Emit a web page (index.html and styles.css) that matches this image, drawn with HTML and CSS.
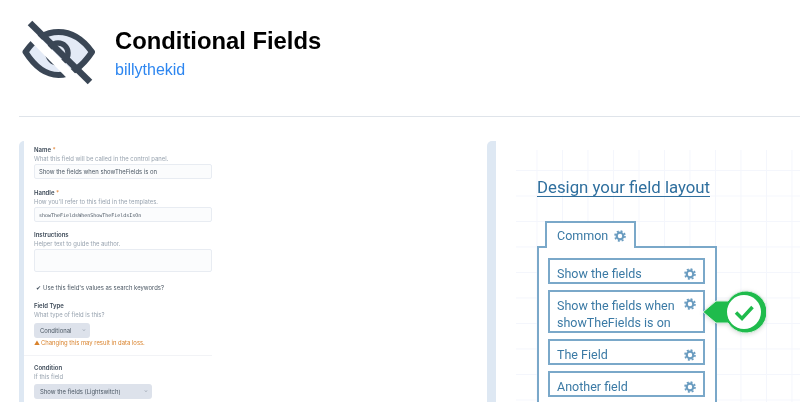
FILE: index.html
```html
<!DOCTYPE html>
<html lang="en">
<head>
<meta charset="utf-8">
<title>Conditional Fields</title>
<link rel="stylesheet" href="styles.css">
</head>
<body>
<svg class="defs" width="0" height="0" aria-hidden="true">
  <symbol id="gear" viewBox="0 0 12 12">
    <circle cx="6" cy="6" r="3.3" fill="none" stroke="currentColor" stroke-width="2.2"/>
    <circle cx="6" cy="6" r="5" fill="none" stroke="currentColor" stroke-width="1.6" stroke-dasharray="2 1.93"/>
  </symbol>
</svg>
<header class="plugin-header">
  <svg class="logo" viewBox="0 0 76 64" width="76" height="64" aria-hidden="true">
    <path d="M4.500 32 C14 18 25 12 37.500 12 C50 12 61 18 71 32 C61 47 50 55 37.500 55 C25 55 14 47 4.500 32 Z" fill="#e3eaf6" stroke="#3a4655" stroke-width="6" stroke-linejoin="round"/>
    <circle cx="37" cy="33" r="10" fill="#e3eaf6" stroke="#3a4655" stroke-width="5.500"/>
    <path d="M4 3 L66 66" stroke="#fff" stroke-width="9" transform="translate(-1 5)"/>
    <path d="M9 3 L69 62" stroke="#3a4655" stroke-width="6.500"/>
  </svg>
  <div class="plugin-meta">
    <h1 class="plugin-title">Conditional Fields</h1>
    <a class="plugin-author" href="#">billythekid</a>
  </div>
</header>
<hr class="rule">
<main class="gallery">
  <section class="shot shot-form">
    <div class="form">
      <div class="field">
        <div class="label">Name <span class="req">*</span></div>
        <div class="hint">What this field will be called in the control panel.</div>
        <div class="input">Show the fields when showTheFields is on</div>
      </div>
      <div class="field">
        <div class="label">Handle <span class="req">*</span></div>
        <div class="hint">How you'll refer to this field in the templates.</div>
        <div class="input mono">showTheFieldsWhenShowTheFieldsIsOn</div>
      </div>
      <div class="field">
        <div class="label">Instructions</div>
        <div class="hint">Helper text to guide the author.</div>
        <div class="input tall"></div>
      </div>
      <div class="check-row"><span class="tick">✔</span>Use this field's values as search keywords?</div>
      <div class="field">
        <div class="label">Field Type</div>
        <div class="hint">What type of field is this?</div>
        <div class="select short">Conditional<span class="caret">⌄</span></div>
        <div class="warning"><span class="warn-icon">▲</span>Changing this may result in data loss.</div>
      </div>
      <div class="divider"></div>
      <div class="field">
        <div class="label">Condition</div>
        <div class="hint">If this field</div>
        <div class="select wide">Show the fields (Lightswitch)<span class="caret">⌄</span></div>
      </div>
    </div>
  </section>
  <section class="shot shot-design">
    <div class="design">
      <h2 class="design-title">Design your field layout</h2>
      <div class="tab">Common<svg class="gear"><use href="#gear"/></svg></div>
      <div class="tab-box">
        <div class="item"><span>Show the fields</span><svg class="gear"><use href="#gear"/></svg></div>
        <div class="item item-double">
          <span>Show the fields when<br>showTheFields is on</span><svg class="gear"><use href="#gear"/></svg>
          <svg class="badge" viewBox="0 0 64 44" width="64" height="44" aria-hidden="true">
            <path d="M1 22 L14 11 H26 A21 21 0 1 1 26 33 H14 Z" fill="#1fbb4c" stroke="#d9efe0" stroke-width="1"/>
            <circle cx="42" cy="22" r="17" fill="#fff"/>
            <path d="M34 22.500 L40 28.500 L50.500 17" fill="none" stroke="#1fbb4c" stroke-width="3.500"/>
          </svg>
        </div>
        <div class="item"><span>The Field</span><svg class="gear"><use href="#gear"/></svg></div>
        <div class="item"><span>Another field</span><svg class="gear"><use href="#gear"/></svg></div>
      </div>
    </div>
  </section>
</main>
</body>
</html>
```
FILE: styles.css
```css
* { box-sizing: border-box; }
html, body { margin: 0; height: 402px; overflow: hidden; background: #fff; }
body { font-family: "Liberation Sans", Arial, sans-serif; }
.defs { display: block; height: 0; }

.plugin-header {
  display: flex;
  align-items: flex-start;
  gap: 18px;
  height: 116px;
  padding: 20px 0 0 21px;
}
.logo { flex: none; filter: blur(0.5px); overflow: visible; }
.plugin-meta { padding-top: 6px; filter: blur(0.25px); }
.plugin-title {
  margin: 0;
  font-size: 23.800px;
  line-height: 30px;
  font-weight: 700;
  color: #000;
}
.plugin-author {
  display: block;
  margin-top: 5px;
  font-size: 16px;
  line-height: 18px;
  color: #2d86f0;
  text-decoration: none;
}
.rule {
  margin: 0 0 0 19px;
  height: 1px;
  border: 0;
  background: #dfe4ea;
}

.gallery {
  display: grid;
  grid-template-columns: 448px 1fr;
  gap: 20px;
  margin: 24px 0 0 19px;
}
.shot {
  height: 262px;
  overflow: hidden;
  border-style: solid;
  border-color: #dee8f3;
  border-width: 0;
  border-top-left-radius: 5px;
}
.shot-form { border-left-width: 5px; }
.shot-design {
  border-left-width: 9px;
  width: 320px;
  background: #fff;
}

/* form screenshot */
.form {
  width: 188px;
  padding: 6px 0 0 10px;
  font-family: Inter, "Liberation Sans", sans-serif;
  font-size: 5.900px;
  color: #3f4d5a;
  filter: blur(0.6px);
}
.field { margin-bottom: 10.500px; }
.label { font-weight: 600; line-height: 6px; margin-bottom: 3px; color: #3d4a58; font-size: 6px; }
.req { color: #e5873a; }
.hint { line-height: 6px; color: #98a3af; margin-bottom: 2px; font-size: 5.900px; }
.input {
  height: 15px;
  padding: 0 4px;
  line-height: 14px;
  background: #fbfcfd;
  border: 1px solid #e8ecf2;
  border-radius: 2px;
  color: #4b5763;
  white-space: nowrap;
}
.mono { font-family: "DejaVu Sans Mono", monospace; font-size: 5px; }
.tall { height: 23px; }
.check-row { display: flex; align-items: center; gap: 1px; height: 10px; margin: 0 0 10px; color: #4b5763; font-size: 5.900px; }
.tick { font-size: 6px; color: #3d4a58; width: 8px; text-align: center; }
.select {
  display: flex;
  justify-content: space-between;
  height: 15px;
  margin-top: 5px;
  padding: 0 4px 0 6px;
  line-height: 15px;
  background: #dde2eb;
  border-radius: 3px;
  color: #4b5763;
}
.short { width: 56px; }
.wide { width: 118px; margin-top: 4px; }
.caret { color: #8a94a0; font-size: 5px; line-height: 12px; }
.warning { margin-top: 1px; line-height: 7px; color: #d9822b; font-size: 5.900px; }
.warn-icon { margin-right: 1px; }
.divider { height: 1px; margin: -1px 0 9px -10px; background: #f2f3f6; }

/* design screenshot */
.design {
  margin: 9px 0 0 20px;
  padding: 28px 0 0 21px;
  height: 253px;
  color: #3b7aa5;
  background-image:
    linear-gradient(#f4f6fc 1px, transparent 1px),
    linear-gradient(90deg, #f4f6fc 1px, transparent 1px);
  background-size: 25.500px 25.500px;
  background-position: 20.500px 20px;
}
.design-title, .tab, .tab-box { filter: blur(0.35px); }
.design-title {
  width: max-content;
  margin: 0 0 24px;
  font-family: Roboto, "Liberation Sans", sans-serif;
  font-size: 16.800px;
  line-height: 18px;
  font-weight: 400;
  color: #2f6f9e;
  border-bottom: 1px solid #2f6f9e;
}
.tab {
  position: relative;
  z-index: 1;
  display: flex;
  align-items: center;
  gap: 6px;
  width: 91px;
  height: 27px;
  margin: 0 0 -2px 8px;
  padding: 0 0 1px 10px;
  background: #fff;
  border: 2px solid #7aa8c9;
  border-bottom: 0;
  font-family: Roboto, sans-serif;
  font-size: 12.500px;
}
.tab-box {
  width: 180px;
  height: 170px;
  padding: 10px 10px 10px 9px;
  background: #fff;
  border: 2px solid #7aa8c9;
  display: flex;
  flex-direction: column;
  gap: 6px;
}
.item {
  position: relative;
  display: flex;
  justify-content: space-between;
  align-items: flex-start;
  height: 26px;
  flex: none;
  padding: 7px 7px;
  border: 2px solid #7aa8c9;
  font-family: Roboto, sans-serif;
  font-size: 12.500px;
  line-height: 14px;
}
.item-double { height: 43px; line-height: 17px; padding-top: 5px; }
.gear { flex: none; width: 12px; height: 12px; color: #6a9cc0; margin-top: 1px; }
.tab .gear { margin: 1px 0 0; }
.badge { position: absolute; left: 152px; top: -2px; filter: drop-shadow(0 1px 2px rgba(0,0,0,.15)); }
```
